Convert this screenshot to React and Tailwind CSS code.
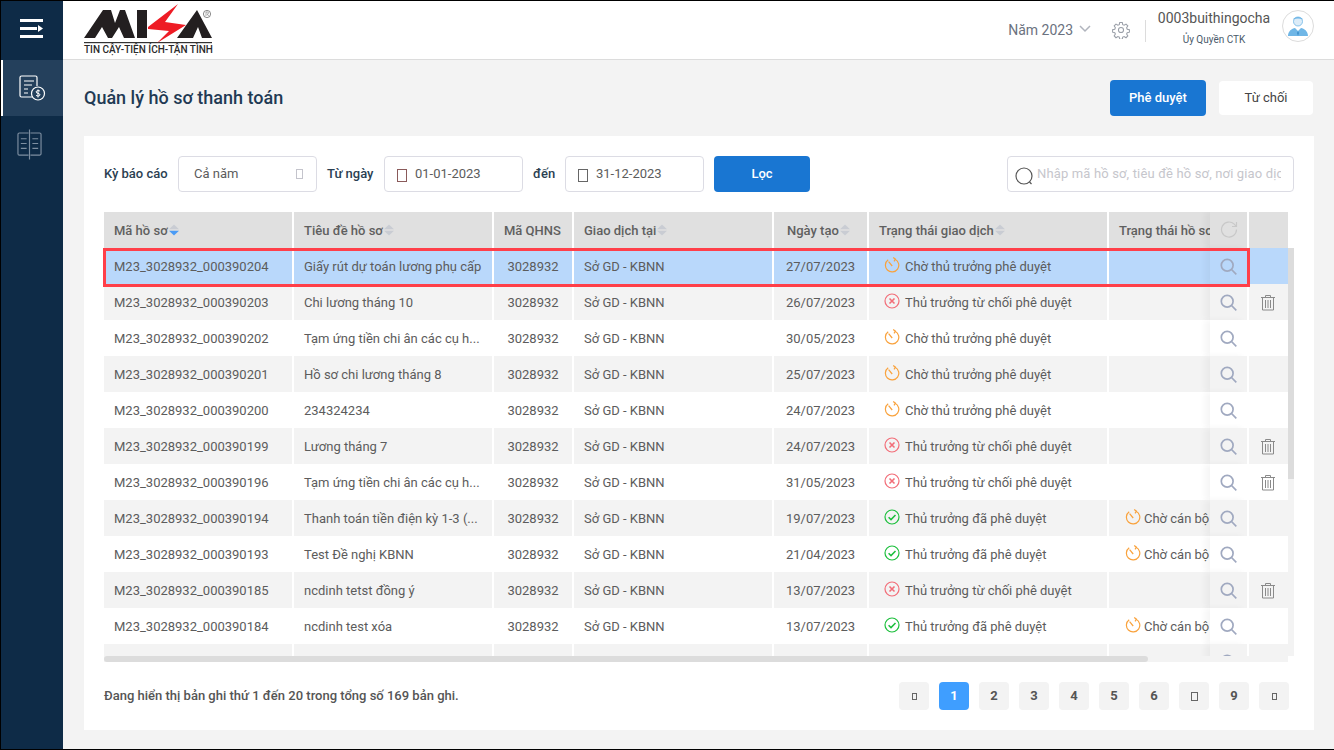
import React from "react";

const rows = [
  ["M23_3028932_000390204", "Giấy rút dự toán lương phụ cấp", "27/07/2023", "wait", "", false],
  ["M23_3028932_000390203", "Chi lương tháng 10", "26/07/2023", "rej", "", true],
  ["M23_3028932_000390202", "Tạm ứng tiền chi ân các cụ h...", "30/05/2023", "wait", "", false],
  ["M23_3028932_000390201", "Hồ sơ chi lương tháng 8", "25/07/2023", "wait", "", false],
  ["M23_3028932_000390200", "234324234", "24/07/2023", "wait", "", false],
  ["M23_3028932_000390199", "Lương tháng 7", "24/07/2023", "rej", "", true],
  ["M23_3028932_000390196", "Tạm ứng tiền chi ân các cụ h...", "31/05/2023", "rej", "", true],
  ["M23_3028932_000390194", "Thanh toán tiền điện kỳ 1-3 (...", "19/07/2023", "ok", "Chờ cán bộ", false],
  ["M23_3028932_000390193", "Test Đề nghị KBNN", "21/04/2023", "ok", "Chờ cán bộ", false],
  ["M23_3028932_000390185", "ncdinh tetst đồng ý", "13/07/2023", "rej", "", true],
  ["M23_3028932_000390184", "ncdinh test xóa", "13/07/2023", "ok", "Chờ cán bộ", false],
  ["M23_3028932_000390183", "Tạm ứng thanh toán kỳ 1", "", "", "", false],
];

const statusText = { wait: "Chờ thủ trưởng phê duyệt", rej: "Thủ trưởng từ chối phê duyệt", ok: "Thủ trưởng đã phê duyệt" };

function WaitIcon() {
  return (
    <svg width="16" height="16" viewBox="0 0 16 16" fill="none" stroke="#f9a23c" strokeWidth="1.200" className="shrink-0 mb-1">
      <path d="M11 2.200A6.700 6.700 0 1 1 4.200 2.800" />
      <path d="M4.600 4.600L8.200 9" />
      <path d="M9.200 0.600L11.400 2.200L10 4.400" />
    </svg>
  );
}
function RejIcon() {
  return (
    <svg width="16" height="16" viewBox="0 0 16 16" fill="none" stroke="#f26d78" strokeWidth="1.200" className="shrink-0 mb-1">
      <circle cx="8" cy="8" r="7" />
      <path d="M5.500 5.500l5 5M10.500 5.500l-5 5" strokeWidth="1.600" />
    </svg>
  );
}
function OkIcon() {
  return (
    <svg width="16" height="16" viewBox="0 0 16 16" fill="none" stroke="#1cbf3c" strokeWidth="1.200" className="shrink-0 mb-1">
      <circle cx="8" cy="8" r="7" />
      <path d="M4.600 8.200l2.400 2.400L11.500 6" strokeWidth="1.500" />
    </svg>
  );
}
const icons = { wait: WaitIcon, rej: RejIcon, ok: OkIcon };

function Search({ color = "#a0a9c0" }) {
  return (
    <svg width="17" height="17" viewBox="0 0 17 17" fill="none" stroke={color} strokeWidth="1.700">
      <circle cx="7.200" cy="7.200" r="5.900" />
      <path d="M11.500 11.500l4.800 4.800" />
    </svg>
  );
}
function Trash() {
  return (
    <svg width="16" height="17" viewBox="0 0 16 17" fill="none" stroke="#8a8a8a" strokeWidth="1">
      <path d="M1 3.500h14M5.500 3V1.500h5V3M2.500 3.500V16h11V3.500M5.500 6v8M8 6v8M10.500 6v8" />
    </svg>
  );
}
function Sort({ active }) {
  return (
    <svg width="10" height="12" viewBox="0 0 10 12" className="shrink-0 ml-px mb-0.5">
      <path d="M5 0.500L10 5.300H0Z" fill="#c9ccd3" />
      <path d="M5 11.500L10 6.700H0Z" fill={active ? "#4a9bf5" : "#c9ccd3"} />
    </svg>
  );
}
function Tofu({ className = "" }) {
  return <span className={"inline-block border " + className} />;
}
function Head({ w, children, sort, active, extra = "" }) {
  return (
    <div className={"flex items-center h-full bg-[#e0e0e0] px-2.5 pt-0.5 text-[13px] text-[#5f5f5f] font-medium shrink-0 overflow-hidden whitespace-nowrap " + w + " " + extra}>
      <span>{children}</span>
      {sort && <Sort active={active} />}
    </div>
  );
}
function Cell({ w, children, extra = "" }) {
  return (
    <div className={"flex items-center h-full px-2.5 pt-0.5 shrink-0 overflow-hidden whitespace-nowrap " + w + " " + extra}>
      {children}
    </div>
  );
}

function Row({ r, i }) {
  const bg = i === 0 ? "bg-[#b9d8fb]" : i % 2 === 1 ? "bg-[#f3f3f3]" : "bg-white";
  const Icon = icons[r[3]];
  return (
    <div className="flex h-9 gap-0.5 shrink-0 text-[13px] text-[#5c5c5c] relative">
      <Cell w={"w-[188px] " + bg}>{r[0]}</Cell>
      <Cell w={"w-[198px] " + bg}>{r[1]}</Cell>
      <Cell w={"w-[78px] justify-center " + bg}>{i < 11 && "3028932"}</Cell>
      <Cell w={"w-[198px] " + bg}>{i < 11 && "Sở GD - KBNN"}</Cell>
      <Cell w={"w-[93px] justify-center " + bg}>{r[2]}</Cell>
      <Cell w={"w-[238px] !pl-[15px] gap-[5px] " + bg}>{Icon && <Icon />}{statusText[r[3]]}</Cell>
      <Cell w={"w-[138px] !pl-4 gap-[3px] " + bg}>
        {r[4] && <><WaitIcon />{r[4]}</>}
      </Cell>
      <Cell w={"w-[39px] justify-center !pl-0 !pr-0.5 !pt-0 " + bg}>{r[5] && <Trash />}</Cell>
      <div className={"absolute right-[41px] top-0 w-[37px] h-full flex items-center justify-center shadow-[-5px_0_6px_rgba(0,0,0,0.04)] " + bg}>
        <Search />
      </div>
    </div>
  );
}

function Logo() {
  return (
    <div className="flex flex-col w-[130px] h-[54px] ml-[21px] mt-[2px]">
      <svg width="130" height="41" viewBox="0 0 130 41" className="shrink-0">
        <path d="M0 35L19 7H27L31 20L36 7H41L51 35H40L35 24L28 35H24L18 24L11 35Z" fill="#231f20" />
        <path d="M53 7H63V35H53Z" fill="#231f20" />
        <path fillRule="evenodd" d="M93 35L113 7L128 35ZM109 35H118L114 24Z" fill="#231f20" />
        <rect x="0" y="39" width="128" height="1.200" fill="#333" />
        <path d="M94 1L64 24V26L85 28L73 40L102 22L81 19Z" fill="#ee1c25" />
        <circle cx="123" cy="11" r="3.600" fill="none" stroke="#555" strokeWidth="0.700" />
        <path d="M122 13V9H123.500Q124.500 9 124.500 10Q124.500 11 123.300 11L124.600 13" fill="none" stroke="#555" strokeWidth="0.500" />
      </svg>
      <div className="leading-[12px] text-[10px] font-medium text-[#2a2a2a] whitespace-nowrap">TIN CẬY-TIỆN ÍCH-TẬN TÌNH</div>
    </div>
  );
}

function Input({ value, red }) {
  return (
    <div className="flex items-center w-[139px] h-9 bg-white border border-[#dcdce4] rounded pl-[12px] text-[13px] text-[#5c5c5c] gap-2 shrink-0">
      <Tofu className={"w-[10px] h-[13px] mt-0.5 " + (red ? "border-[#8a5a5a]" : "border-[#666]")} />
      <span>{value}</span>
    </div>
  );
}

export default function App() {
  const pages = ["1", "2", "3", "4", "5", "6"];
  return (
    <div className="w-[1334px] h-[750px] border-y border-l border-black flex overflow-hidden bg-[#f3f3f3]" style={{ fontFamily: "Roboto, 'Noto Sans', sans-serif" }}>
      <aside className="w-[62px] shrink-0 bg-[#0e2b47] flex flex-col">
        <div className="h-[59px] flex items-center justify-center pb-1">
          <svg width="24" height="20" viewBox="0 0 24 20" fill="#fff">
            <rect x="0" y="0" width="23" height="3" />
            <rect x="0" y="8" width="17" height="3" />
            <rect x="0" y="16" width="23" height="3" />
            <path d="M18 6l5 3.500-5 3.500z" />
          </svg>
        </div>
        <div className="h-14 bg-[#24405c] border-l-2 border-white flex items-center justify-center pr-0.5">
          <svg width="28" height="28" viewBox="0 0 28 28" fill="none" stroke="#fff" strokeWidth="1.200">
            <path d="M15 23H3.500a1.500 1.500 0 0 1-1.500-1.500V3.500A1.500 1.500 0 0 1 3.500 2h14A1.500 1.500 0 0 1 19 3.500V12" />
            <path d="M6 7h10M6 11h8M6 15h4M6 19h4" />
            <circle cx="20" cy="19.500" r="6.500" />
            <path d="M22 17.200c-.6-.8-3.800-1-3.900.7-.1 1.800 4 1 3.900 3-.1 1.600-3.400 1.300-4 .3M20 15.500v8" strokeWidth="1" />
          </svg>
        </div>
        <div className="h-14 flex items-center justify-center pr-[5px]">
          <svg width="25" height="31" viewBox="0 0 26 32" fill="none" stroke="#7e8fa1" strokeWidth="1.200">
            <path d="M12 4H2.500A1.500 1.500 0 0 0 1 5.500v20A1.500 1.500 0 0 0 2.500 27H12M14 4h9.500A1.500 1.500 0 0 1 25 5.500v20a1.500 1.500 0 0 1-1.500 1.500H14M13 0.500v31" />
            <path d="M4 10h6M4 15h6M4 20h6M16 10h6M16 15h6M16 20h6" />
          </svg>
        </div>
      </aside>

      <div className="flex-1 flex flex-col min-w-0">
        <header className="h-[58px] shrink-0 bg-white border-b border-[#dcdcdc] flex items-start justify-between box-content">
          <Logo />
          <div className="flex items-center h-full pr-[20px] pb-2">
            <span className="text-sm text-[#6b7280] mr-1.5 mt-2">Năm 2023</span>
            <svg width="12" height="8" viewBox="0 0 12 8" fill="none" stroke="#b0b4bd" strokeWidth="1.500" className="mr-[21px] mt-1.5"><path d="M1 1l5 5 5-5" /></svg>
            <svg width="18" height="18" viewBox="0 0 24 24" fill="none" stroke="#9a9fa8" strokeWidth="1.400" className="mr-[15px] mt-2">
              <circle cx="12" cy="12" r="3.400" />
              <path d="M10.300 2h3.400l.6 2.900 1.900.8 2.500-1.600 2.400 2.400-1.600 2.500.8 1.900 2.900.6v3.400l-2.900.6-.8 1.900 1.600 2.500-2.400 2.400-2.500-1.600-1.900.8-.6 2.900h-3.400l-.6-2.900-1.900-.8-2.500 1.600-2.400-2.400 1.600-2.500-.8-1.900-2.900-.6v-3.400l2.900-.6.8-1.900-1.600-2.500 2.400-2.400 2.500 1.600 1.900-.8z" />
            </svg>
            <div className="w-px h-[22px] bg-[#dcdcdc] mr-3 mt-2.5" />
            <div className="flex flex-col items-center mr-3 w-[112px] mt-1">
              <span className="text-sm leading-[18px] text-[#555]">0003buithingocha</span>
              <span className="text-[10px] leading-[14px] mt-1.5 text-[#4a5a6a]">Ủy Quyền CTK</span>
            </div>
            <div className="w-8 h-8 rounded-full border border-[#dcdcdc] flex items-center justify-center overflow-hidden">
              <svg width="24" height="24" viewBox="0 0 24 24">
                <circle cx="12" cy="7.500" r="4.500" fill="#dcecf8" stroke="#6fb6e6" strokeWidth="0.800" />
                <path d="M7 5.500c1-3.500 9-3.500 10 0-3-1.500-7-1.500-10 0z" fill="#6fb6e6" />
                <path d="M2 22c0-5 4-7.500 7-8l3 3 3-3c3 .5 7 3 7 8z" fill="#6fb6e6" />
                <path d="M12 17l-1 2 1 3 1-3z" fill="#3d8ecb" />
              </svg>
            </div>
          </div>
        </header>

        <main className="flex-1 flex flex-col pl-[21px] pr-[21px] min-h-0">
          <div className="h-[76px] shrink-0 flex items-center justify-between">
            <h1 className="text-lg font-medium text-[#1f3a54]">Quản lý hồ sơ thanh toán</h1>
            <div className="flex gap-[13px] items-center">
              <button className="w-24 h-9 bg-[#1976d2] text-white text-[13px] font-medium rounded">Phê duyệt</button>
              <button className="w-[94px] h-[34px] bg-white text-[#444] text-[13px] rounded">Từ chối</button>
            </div>
          </div>

          <section className="bg-white w-[1230px] h-[594px] px-5 pt-5 flex flex-col">
            <div className="flex items-center h-9 shrink-0">
              <span className="text-[13px] font-medium text-[#2b3f52] w-[74px] shrink-0">Kỳ báo cáo</span>
              <div className="flex items-center justify-between w-[139px] h-9 bg-white border border-[#dcdce4] rounded pl-[15px] pr-[13px] text-[13px] text-[#5c5c5c] shrink-0">
                <span>Cả năm</span>
                <Tofu className="w-[7px] h-[10px] border-[#c4c4cc]" />
              </div>
              <span className="text-[13px] font-medium text-[#2b3f52] ml-2.5 w-[57px] shrink-0">Từ ngày</span>
              <Input value="01-01-2023" red />
              <span className="text-[13px] font-medium text-[#2b3f52] ml-2.5 w-[32px] shrink-0">đến</span>
              <Input value="31-12-2023" />
              <button className="ml-2.5 w-24 h-9 bg-[#1976d2] text-white text-[13px] font-medium rounded shrink-0">Lọc</button>
              <div className="ml-auto flex items-center w-[287px] h-9 border border-[#dcdce4] rounded pl-[7px] pr-[12px] gap-[3px] shrink-0">
                <svg width="19" height="19" viewBox="0 0 19 19" fill="none" stroke="#555" strokeWidth="1.200" className="shrink-0 mt-1">
                  <circle cx="9" cy="9" r="8" />
                  <path d="M14.500 15l2 2" />
                </svg>
                <span className="text-[13px] tracking-[0.15px] text-[#c6c6cc] whitespace-nowrap overflow-hidden">Nhập mã hồ sơ, tiêu đề hồ sơ, nơi giao dịch</span>
              </div>
            </div>

            <div className="relative mt-5 w-[1190px] h-[450px] shrink-0">
              <div className="w-[1184px] h-[444px] overflow-hidden flex flex-col">
                <div className="flex h-9 gap-0.5 shrink-0 relative">
                  <Head w="w-[188px]" sort active>Mã hồ sơ</Head>
                  <Head w="w-[198px]" sort>Tiêu đề hồ sơ</Head>
                  <Head w="w-[78px]">Mã QHNS</Head>
                  <Head w="w-[198px]" sort>Giao dịch tại</Head>
                  <Head w="w-[93px] !px-[13px]" sort>Ngày tạo</Head>
                  <Head w="w-[238px]" sort>Trạng thái giao dịch</Head>
                  <Head w="w-[138px]">Trạng thái hồ sơ</Head>
                  <Head w="w-[39px]" />
                  <div className="absolute right-[41px] top-0 w-[37px] h-full bg-[#e0e0e0] flex items-center justify-center shadow-[-5px_0_6px_rgba(0,0,0,0.04)]">
                    <svg width="18" height="18" viewBox="0 0 18 18" fill="none" stroke="#c8c8c8" strokeWidth="1.200">
                      <path d="M16.500 8.500a7.500 7.500 0 1 1-2.300-5.400L16.500 5.500" />
                      <path d="M16.500 1v4.500H12" />
                    </svg>
                  </div>
                </div>
                {rows.map((r, i) => <Row key={r[0]} r={r} i={i} />)}
              </div>
              {/* horizontal scrollbar */}
              <div className="absolute left-0 top-[444px] w-[1184px] h-1.5 bg-[#f3f3f3]">
                <div className="w-[1044px] h-full bg-[#dcdcdc] rounded-sm" />
              </div>
              {/* vertical scrollbar */}
              <div className="absolute left-[1184px] top-9 w-1.5 h-[408px] bg-[#f3f3f3]">
                <div className="w-full h-[231px] bg-[#dcdcdc]" />
              </div>
              {/* selection box */}
              <div className="absolute left-[-1px] top-9 w-[1147px] h-[39px] border-[3px] border-[#ff3f49] pointer-events-none" />
            </div>

            <div className="flex items-center justify-between mt-5 h-7 w-[1185px]">
              <span className="text-[13px] font-medium text-[#555]">Đang hiển thị bản ghi thứ 1 đến 20 trong tổng số 169 bản ghi.</span>
              <div className="flex gap-2.5">
                <div className="w-[30px] h-7 rounded bg-[#f3f3f3] flex items-center justify-center"><Tofu className="w-[5px] h-[7px] border-[#666]" /></div>
                {pages.map((p, i) => (
                  <div key={p} className={"w-[30px] h-7 rounded flex items-center justify-center text-[13px] font-bold " + (i === 0 ? "bg-[#3f9eff] text-white" : "bg-[#f3f3f3] text-[#555]")}>{p}</div>
                ))}
                <div className="w-[30px] h-7 rounded bg-[#f3f3f3] flex items-center justify-center"><Tofu className="w-[7px] h-[9px] border-[#666]" /></div>
                <div className="w-[30px] h-7 rounded bg-[#f3f3f3] flex items-center justify-center text-[13px] font-bold text-[#555]">9</div>
                <div className="w-[30px] h-7 rounded bg-[#f3f3f3] flex items-center justify-center"><Tofu className="w-[5px] h-[7px] border-[#666]" /></div>
              </div>
            </div>
          </section>
        </main>
      </div>
    </div>
  );
}
